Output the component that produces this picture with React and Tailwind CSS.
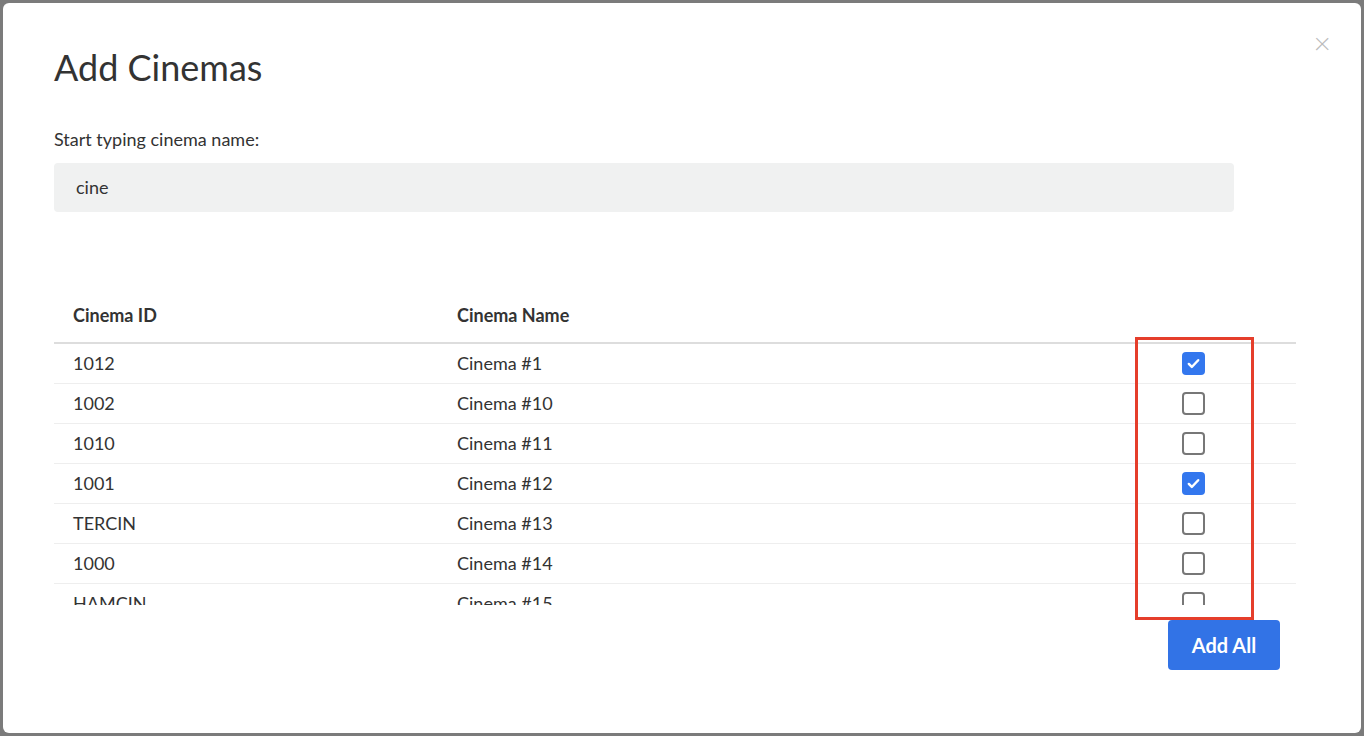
import React from "react";

const rows = [
  ["1012", "Cinema #1", true],
  ["1002", "Cinema #10", false],
  ["1010", "Cinema #11", false],
  ["1001", "Cinema #12", true],
  ["TERCIN", "Cinema #13", false],
  ["1000", "Cinema #14", false],
  ["HAMCIN", "Cinema #15", false],
];

function Box({ checked }) {
  return checked ? (
    <span className="flex w-[23px] h-[23px] items-center justify-center rounded-[4px] bg-[#3377ee]">
      <svg viewBox="0 0 16 16" className="w-[15px] h-[15px]" fill="none" stroke="white" strokeWidth="2.6" strokeLinecap="round" strokeLinejoin="round">
        <path d="M3 8.5l3.2 3.2L13 4.5" />
      </svg>
    </span>
  ) : (
    <span className="block w-[23px] h-[23px] rounded-[4px] border-2 border-[#777]" />
  );
}

export default function App() {
  return (
    <div className="w-[1364px] h-[736px] bg-[#7b7b7b] p-[3px] font-[Lato,sans-serif] text-[#333]">
      <div className="relative w-full h-full bg-white rounded-[6px] pl-[51px] pr-[65px] pt-[40px]">
        <button className="absolute right-[30px] top-[24px] text-[#bbb] text-[30px] leading-none font-light">×</button>
        <h1 className="text-[36px] leading-[48px] text-[#333]">Add Cinemas</h1>
        <p className="mt-[36px] text-[18px] leading-[24px]">Start typing cinema name:</p>
        <div className="mt-[12px] w-[1180px] h-[49px] bg-[#f0f1f1] rounded-[4px] flex items-center px-[22px] text-[18px] font-['Liberation_Sans',sans-serif]">cine</div>
        <div className="mt-[77px]">
          <div className="flex h-[55px] items-center border-b-2 border-[#ddd] text-[18px] font-bold">
            <div className="w-[403px] pl-[19px]">Cinema ID</div>
            <div>Cinema Name</div>
          </div>
          <div className="h-[261px] overflow-hidden">
            {rows.map(([id, name, c]) => (
              <div key={id} className="flex h-[40px] items-center border-b border-[#eee] text-[18px]">
                <div className="w-[403px] shrink-0 pl-[19px]">{id}</div>
                <div className="w-[725px] shrink-0">{name}</div>
                <Box checked={c} />
              </div>
            ))}
          </div>
        </div>
        <div className="absolute left-[1132px] top-[334px] w-[119px] h-[283px] border-[3px] border-[#e53e2b]" />
        <div className="flex justify-end mt-[15px] pr-[16px]">
          <button className="w-[112px] h-[50px] rounded-[4px] bg-[#3273e6] text-white text-[20px] font-bold">Add All</button>
        </div>
      </div>
    </div>
  );
}
